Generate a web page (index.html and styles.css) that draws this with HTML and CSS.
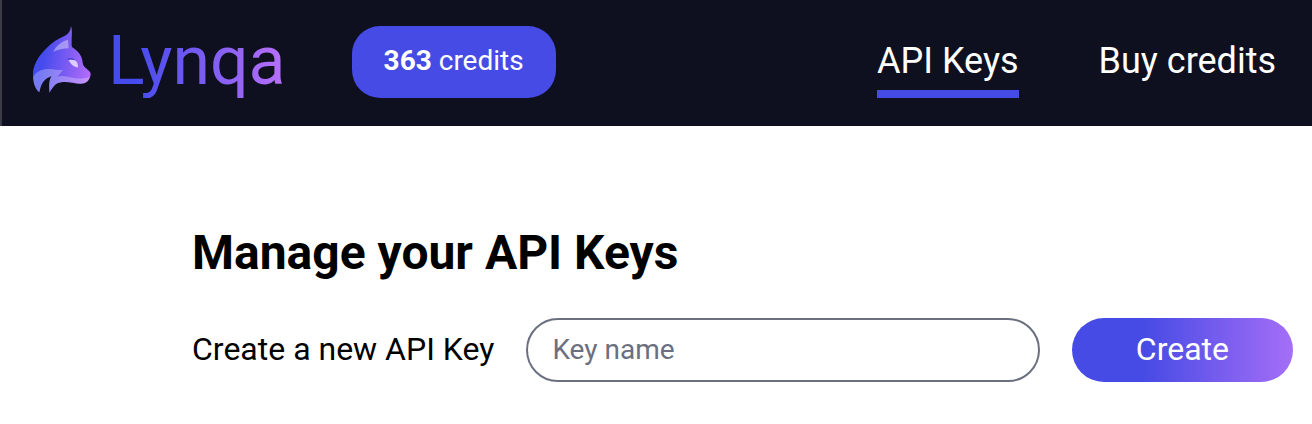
FILE: index.html
```html
<!DOCTYPE html>
<html lang="en">
<head>
<meta charset="utf-8">
<meta name="viewport" content="width=device-width, initial-scale=1">
<title>Lynqa - API Keys</title>
<link rel="stylesheet" href="styles.css">
</head>
<body>
<header class="topbar">
  <a class="brand" href="#" aria-label="Lynqa">
    <svg class="brand-mark" viewBox="96 78 180 204" aria-hidden="true">
      <defs>
        <linearGradient id="fur" gradientUnits="userSpaceOnUse" x1="110" y1="200" x2="272" y2="225">
          <stop offset="0.1" stop-color="#454bed"/>
          <stop offset="1" stop-color="#b56cf9"/>
        </linearGradient>
      </defs>
      <path fill="url(#fur)" d="M213 78C218 90 215 105 215 119C215 130 214 138 217 142C234 153 246 166 248 188C250 205 268 207 272 220C272 232 267 243 255 249C235 256 209 243 184 247C163 249 159 264 148 278C148 258 145 246 154 228C129 239 124 250 118 277C105 267 99 246 99 222C99 187 127 151 165 123C190 107 210 108 213 78Z"/>
      <path fill="#fff" fill-opacity=".27" d="M99 232C109 213 128 206 150 207C164 208 175 211 189 210C182 217 179 224 172 230C185 225 201 230 218 233C239 237 254 236 269 232C267 241 262 247 255 249C235 256 209 243 184 247C163 249 159 264 148 278C148 258 145 246 154 228C129 239 124 250 118 277C106 268 100 251 99 232Z"/>
      <path fill="#fff" fill-opacity=".38" d="M204 119L206 145C188 145 175 149 160 155C169 137 184 124 204 119Z"/>
      <path fill="#4c43d4" d="M199 177C208 173 218 173 225 179L216 182Z"/>
      <path fill="#dccdfd" d="M206 180C212 178 221 179 227 182C233 187 234 194 234 202C223 201 213 195 206 180Z"/>
    </svg>
    <span class="brand-name">Lynqa</span>
  </a>
  <p class="credits"><strong>363</strong> credits</p>
  <nav class="nav" aria-label="Main">
    <a class="nav-link nav-link-active" href="#keys" aria-current="page">API Keys</a>
    <a class="nav-link" href="#credits">Buy credits</a>
  </nav>
</header>
<main class="content" id="keys">
  <h1 class="title">Manage your API Keys</h1>
  <form class="key-form">
    <label class="key-label" for="key-name">Create a new API Key</label>
    <input class="key-input" id="key-name" type="text" placeholder="Key name">
    <button class="create" type="button">Create</button>
  </form>
</main>
</body>
</html>
```
FILE: styles.css
```css
* {
  box-sizing: border-box;
}

body {
  margin: 0;
  background: #fff;
  color: #000;
  font-family: Roboto, "Liberation Sans", sans-serif;
}

.topbar {
  display: flex;
  align-items: flex-start;
  padding: 26px 36px 28px 30px;
  border-left: 2px solid #3b3b48;
  background: #0e0f1f;
}

.brand {
  display: flex;
  align-items: flex-start;
  gap: 16px;
  text-decoration: none;
}

.brand-mark {
  width: 60px;
  height: 68px;
}

.brand-name {
  padding-bottom: 2px;
  background: linear-gradient(90deg, #454bed 15%, #ba70fa);
  background-clip: text;
  -webkit-background-clip: text;
  color: transparent;
  font-size: 68px;
  line-height: 70px;
}

.credits {
  margin: 0 0 0 66px;
  padding: 17px 32px 19px;
  border-radius: 28px;
  background: #474be5;
  color: #fff;
  font-size: 28px;
  line-height: 36px;
  white-space: nowrap;
}

.nav {
  display: flex;
  gap: 80px;
  margin-left: auto;
}

.nav-link {
  padding-top: 11px;
  padding-bottom: 5px;
  border-bottom: 8px solid transparent;
  color: #fff;
  font-size: 36px;
  line-height: 48px;
  text-decoration: none;
  white-space: nowrap;
}

.nav-link-active {
  border-bottom-color: #474be5;
}

.content {
  padding: 97px 19px 40px 192px;
}

.title {
  margin: 0;
  font-size: 48px;
  font-weight: 700;
  line-height: 60px;
}

.key-form {
  display: flex;
  align-items: center;
  gap: 32px;
  margin-top: 35px;
}

.key-label {
  padding-bottom: 2px;
  font-size: 32px;
  line-height: 40px;
  white-space: nowrap;
}

.key-input {
  flex: 1;
  min-width: 0;
  height: 64px;
  padding: 0 24px 2px;
  border: 2px solid #6b7080;
  border-radius: 32px;
  background: #fff;
  color: #000;
  font-family: inherit;
  font-size: 28px;
}

.key-input::placeholder {
  color: #6b7080;
  opacity: 1;
}

.create {
  height: 64px;
  padding: 0 64px 2px;
  border: 0;
  border-radius: 32px;
  background: linear-gradient(90deg, #474be5 33%, #a56ef7);
  color: #fff;
  font-family: inherit;
  font-size: 32px;
}
```
